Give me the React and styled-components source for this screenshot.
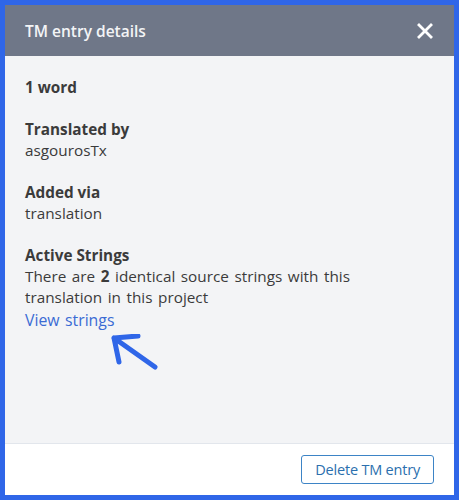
import React from 'react';
import styled, { createGlobalStyle } from 'styled-components';

const Global = createGlobalStyle`
  html, body { margin: 0; padding: 0; background: #2f66e8; }
  body { font-family: "Open Sans", "Lato", sans-serif; }
`;

const Frame = styled.div`
  width: 459px; height: 500px; box-sizing: border-box;
  border: 5px solid #2f66e8; display: flex; flex-direction: column; background: #fff;
`;
const Header = styled.div`
  height: 51px; flex-shrink: 0; background: #6f7788; display: flex; align-items: center;
  justify-content: space-between; padding: 0 20px; box-sizing: border-box;
`;
const Title = styled.h2`margin: 0; font-size: 15.5px; font-weight: 600; color: #f3f4f6;`;
const Close = styled.button`
  border: none; background: none; padding: 0; width: 18px; height: 18px; cursor: pointer;
  display: flex; align-items: center; justify-content: center;
`;
const Body = styled.div`
  flex: 1; background: #f3f4f6; padding: 21px 20px; display: flex; flex-direction: column; gap: 21px;
  border-bottom: 1px solid #e2e6ec; color: #3b3b3b; font-size: 15.3px; line-height: 21px;
`;
const Section = styled.div`display: flex; flex-direction: column;`;
const Label = styled.div`font-weight: 700;`;
const Value = styled.div`font-weight: 400; word-spacing: 1.6px; max-width: 400px;`;
const Strong = styled.strong`font-weight: 700;`;
const Link = styled.a`color: #3a6bd4; text-decoration: none; cursor: pointer; align-self: flex-start; margin-top: 2px; font-size: 15.8px; word-spacing: 1.4px;`;
const Pointer = styled.svg`margin: 3px 0 0 85px; display: block;`;
const Footer = styled.div`
  height: 51px; flex-shrink: 0; display: flex; align-items: center; justify-content: flex-end; padding: 0 20px;
`;
const Button = styled.button`
  height: 29px; padding: 0 13px; border: 1px solid #3d84c6; border-radius: 3px; background: #fff;
  color: #2b6fae; font-family: inherit; font-size: 14.5px; letter-spacing: -0.2px; cursor: pointer;
`;

export default function App() {
  return (
    <>
      <Global />
      <Frame>
        <Header>
          <Title>TM entry details</Title>
          <Close aria-label="Close">
            <svg width="16" height="16" viewBox="0 0 16 16">
              <path d="M2 2L14 14M14 2L2 14" stroke="#fff" strokeWidth="2.8" strokeLinecap="square" />
            </svg>
          </Close>
        </Header>
        <Body>
          <Section><Label>1 word</Label></Section>
          <Section><Label>Translated by</Label><Value>asgourosTx</Value></Section>
          <Section><Label>Added via</Label><Value>translation</Value></Section>
          <Section>
            <Label>Active Strings</Label>
            <Value>There are <Strong>2</Strong> identical source strings with this translation in this project</Value>
            <Link>View strings</Link>
            <Pointer width="48" height="36" viewBox="0 0 48 36">
              <path d="M4 4L45 33M4 4L28 2M4 4L9 28" stroke="#2f66e8" strokeWidth="5" strokeLinecap="round" fill="none" />
            </Pointer>
          </Section>
        </Body>
        <Footer><Button>Delete TM entry</Button></Footer>
      </Frame>
    </>
  );
}
